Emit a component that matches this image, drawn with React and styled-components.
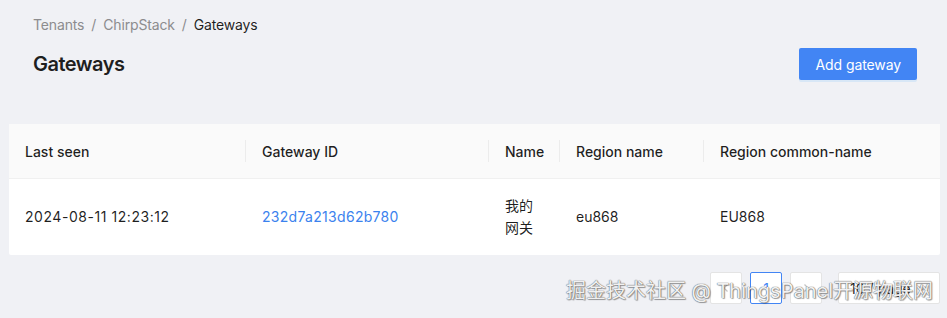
import React from "react"
import styled, { createGlobalStyle } from "styled-components"

const Global = createGlobalStyle`
    body{
        margin: 0;
        background: #f0f1f5;
        font-family: Inter, "Noto Sans", "Noto Sans CJK SC", sans-serif;
        font-size: 14px;
        color: rgba(0,0,0,0.88);
    }
`

const columns = [
    { title: "Last seen", width: 237 },
    { title: "Gateway ID", width: 243 },
    { title: "Name", width: 71 },
    { title: "Region name", width: 144 },
    { title: "Region common-name", width: 236 },
]

const rows = [
    { seen: "2024-08-11 12:23:12", id: "232d7a213d62b780", name: "我的网关", region: "eu868", common: "EU868" },
]

export default function App() {
    return (
        <Page>
            <Global />
            <Header>
                <Crumbs>
                    <span>Tenants</span>
                    <Sep>/</Sep>
                    <span>ChirpStack</span>
                    <Sep>/</Sep>
                    <span className="current">Gateways</span>
                </Crumbs>
                <TitleRow>
                    <h1>Gateways</h1>
                    <PrimaryButton>Add gateway</PrimaryButton>
                </TitleRow>
            </Header>

            <Card>
                <Table>
                    <colgroup>
                        {columns.map(c => <col key={c.title} style={{ width: c.width }} />)}
                    </colgroup>
                    <thead>
                        <tr>
                            {columns.map((c, i) => (
                                <Th key={c.title} $divider={i < columns.length - 1}>{c.title}</Th>
                            ))}
                        </tr>
                    </thead>
                    <tbody>
                        {rows.map(r => (
                            <tr key={r.id}>
                                <Td $spacing="0.55px">{r.seen}</Td>
                                <Td $spacing="0.3px"><a href="#gw">{r.id}</a></Td>
                                <Td>{r.name}</Td>
                                <Td>{r.region}</Td>
                                <Td>{r.common}</Td>
                            </tr>
                        ))}
                    </tbody>
                </Table>
            </Card>

            <Pager>
                <PageBtn aria-label="prev">
                    <svg width="10" height="10" viewBox="0 0 10 10"><path d="M6.5 1.5 3 5l3.5 3.5" fill="none" stroke="#c4c4c4" strokeWidth="1.3" /></svg>
                </PageBtn>
                <PageBtn $active>1</PageBtn>
                <PageBtn aria-label="next">
                    <svg width="10" height="10" viewBox="0 0 10 10"><path d="M3.5 1.5 7 5 3.5 8.5" fill="none" stroke="#c4c4c4" strokeWidth="1.3" /></svg>
                </PageBtn>
                <SizeSelect>
                    <span>10 / page</span>
                    <svg width="10" height="10" viewBox="0 0 10 10"><path d="M1.5 3.5 5 7l3.5-3.5" fill="none" stroke="#bfbfbf" strokeWidth="1.3" /></svg>
                </SizeSelect>
                <Watermark>掘金技术社区 @ ThingsPanel开源物联网</Watermark>
            </Pager>
        </Page>
    )
}

const Page = styled.div`
    padding: 0 7px 0 9px;
    min-height: 318px;
    box-sizing: border-box;
`

const Header = styled.div`
    padding: 14px 23px 44px 24px;
`

const Crumbs = styled.div`
    display: flex;
    align-items: center;
    line-height: 22px;
    letter-spacing: -0.15px;
    color: #8c8c8e;

    .current{
        color: rgba(0,0,0,0.88);
    }
`

const Sep = styled.span`
    margin: 0 7px;
    color: #8c8c8e;
`

const TitleRow = styled.div`
    display: flex;
    align-items: center;
    justify-content: space-between;
    margin-top: 12px;

    h1{
        margin: 0;
        font-size: 20px;
        line-height: 32px;
        font-weight: 600;
        letter-spacing: -0.5px;
        color: #1f1f1f;
    }
`

const PrimaryButton = styled.button`
    height: 32px;
    padding: 0 16px 0 17px;
    border: none;
    border-radius: 2px;
    background: #4285f4;
    color: #fff;
    font-family: inherit;
    font-size: 14px;
    letter-spacing: -0.1px;
    box-shadow: 0 2px 0 rgba(5,145,255,0.1);
`

const Card = styled.div`
    background: #fff;
    border-radius: 2px;
`

const Table = styled.table`
    width: 100%;
    border-collapse: collapse;
    table-layout: fixed;

    a{
        color: #3b82ee;
        text-decoration: none;
    }
`

const Th = styled.th`
    position: relative;
    height: 54px;
    padding: 0 16px;
    text-align: left;
    font-weight: 500;
    background: #fafafa;
    border-bottom: 1px solid #f0f0f0;
    color: rgba(0,0,0,0.88);

    &::after{
        content: "";
        display: ${p => p.$divider ? "block" : "none"};
        position: absolute;
        right: 0;
        top: 50%;
        width: 1px;
        height: 22px;
        transform: translateY(-50%);
        background: #ececec;
    }
`

const Td = styled.td`
    height: 76px;
    padding: 0 16px;
    line-height: 22px;
    vertical-align: middle;
    color: rgba(0,0,0,0.88);
    letter-spacing: ${p => p.$spacing || "normal"};
`

const Pager = styled.div`
    position: relative;
    display: flex;
    justify-content: flex-end;
    align-items: center;
    gap: 8px;
    margin-top: 17px;
`

const PageBtn = styled.div`
    width: 32px;
    height: 32px;
    box-sizing: border-box;
    display: flex;
    align-items: center;
    justify-content: center;
    background: #fff;
    border: 1px solid ${p => p.$active ? "#4285f4" : "#e4e4e4"};
    border-radius: 2px;
    color: ${p => p.$active ? "#4285f4" : "rgba(0,0,0,0.88)"};
`

const SizeSelect = styled.div`
    width: 102px;
    height: 32px;
    margin-left: 8px;
    box-sizing: border-box;
    display: flex;
    align-items: center;
    justify-content: space-between;
    padding: 0 11px;
    background: #fff;
    border: 1px solid #e4e4e4;
    border-radius: 2px;
`

const Watermark = styled.div`
    position: absolute;
    right: 7px;
    top: 3px;
    font-size: 20px;
    white-space: nowrap;
    color: rgba(255,255,255,0.92);
    text-shadow: 0 0 1px #6a6a6a, 0 0 1px #6a6a6a, 1px 1px 1px rgba(0,0,0,0.35);
    pointer-events: none;
`
